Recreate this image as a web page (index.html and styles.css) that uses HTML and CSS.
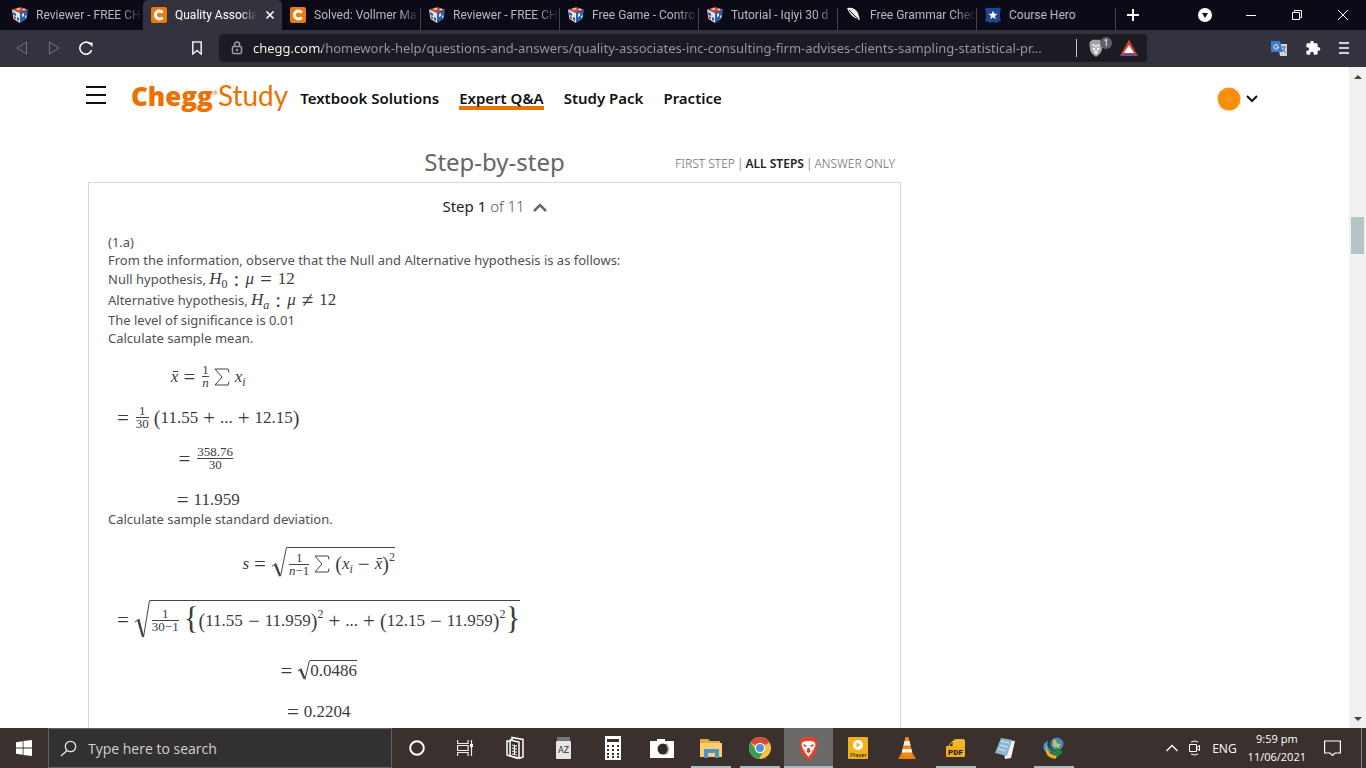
FILE: index.html
```html
<!DOCTYPE html>
<html lang="en">
<head>
  <meta charset="UTF-8">
  <meta name="viewport" content="width=device-width, initial-scale=1.0">
  <title>Quality Associates</title>
  <link rel="stylesheet" href="styles.css">
</head>
<body>
  <!-- shared icons -->
  <svg class="defs" aria-hidden="true">
    <symbol id="cube" viewBox="0 0 16 16">
      <path d="M0 2.500L8 0l8 2.500L8 6z" fill="#c94a3c"/>
      <path d="M0 2.500L8 6v10L1.500 12z" fill="#dfe3ea"/>
      <path d="M16 2.500L8 6v10l6.500-4z" fill="#2f5fa8"/>
      <path d="M4 2l3-1 2 1-3 1zM10 2.500l2-1 2 1-2 1z" fill="#f0d9d6"/>
      <path d="M1 5l3 1.500V9L1.300 8zM5 10l2 1v3l-2-1z" fill="#2c58a5"/>
      <path d="M2 9l2 1v2.500l-2-1z" fill="#c94a3c"/>
      <path d="M10 7l2-1v3l-2 1zM13 9l1.500-1v2L13 11z" fill="#e8edf5"/>
    </symbol>
    <symbol id="chegg" viewBox="0 0 16 16">
      <rect width="16" height="16" rx="2" fill="#e87c10"/>
      <path d="M11.600 5.600A4 4 0 1 0 11.600 10.400" fill="none" stroke="#fff" stroke-width="3"/>
    </symbol>
    <symbol id="lion" viewBox="0 0 18 24">
      <path d="M4 1h10l1.500 2H17l1 4-1.500 9Q15 20 9 24 3 20 1.500 16L0 7l1-4h1.500z"/>
    </symbol>
    <symbol id="sigma" viewBox="0 0 16 18">
      <path d="M15 4.500L14.200 1H1l7 8-7 8h13.200L15 13.500" fill="none" stroke="#444"/>
    </symbol>
  </svg>

  <div class="tabs" role="tablist">
    <button class="tab" role="tab"><svg class="icon"><use href="#cube"/></svg><span>Reviewer - FREE CH</span></button>
    <button class="tab active" role="tab" aria-selected="true"><svg class="icon"><use href="#chegg"/></svg><span>Quality Associa</span>
      <svg class="close" viewBox="0 0 10 10"><path d="M1.500 1.500l7 7M8.500 1.500l-7 7" stroke="#fff" stroke-width="1.600"/></svg></button>
    <button class="tab" role="tab"><svg class="icon"><use href="#chegg"/></svg><span>Solved: Vollmer Ma</span></button>
    <button class="tab" role="tab"><svg class="icon"><use href="#cube"/></svg><span>Reviewer - FREE CH</span></button>
    <button class="tab" role="tab"><svg class="icon"><use href="#cube"/></svg><span>Free Game - Contro</span></button>
    <button class="tab" role="tab"><svg class="icon"><use href="#cube"/></svg><span>Tutorial - Iqiyi 30 d</span></button>
    <button class="tab" role="tab"><svg class="icon" viewBox="0 0 16 16"><path d="M1 1q8-1 11 5l2 7-3-1Q4 9 1 1z" fill="#eee"/><path d="M3 3l9 9" stroke="#0b0b17" stroke-width="1"/></svg><span>Free Grammar Chec</span></button>
    <button class="tab" role="tab"><svg class="icon" viewBox="0 0 16 16"><path d="M1 0l2 1h10l2-1 1 3-1 2v6l1 3-3 1-2 1-3-1-3 1-2-1-3-1 1-3V5L0 3z" fill="#1d4596"/><path d="M8 3.500l1.200 3.200 3.400.1-2.700 2.100 1 3.300L8 10.300l-2.900 1.900 1-3.300-2.700-2.100 3.400-.1z" fill="#fff"/></svg><span>Course Hero</span></button>
    <button class="new-tab" aria-label="New tab"><svg width="12" height="12"><path d="M6 0v12M0 6h12" stroke="#fff" stroke-width="2"/></svg></button>
    <div class="window-buttons">
      <button aria-label="Search tabs"><svg width="14" height="14"><circle cx="7" cy="7" r="7" fill="#fff"/><path d="M4 5h6L7 10z" fill="#0b0b17"/></svg></button>
      <button aria-label="Minimize"><svg width="10" height="10"><path d="M0 5.500h10" stroke="#fff"/></svg></button>
      <button aria-label="Restore"><svg width="10" height="10" fill="none" stroke="#fff"><path d="M.5 2.500h7v7h-7zM2.500 2V.5h7v7H8"/></svg></button>
      <button aria-label="Close"><svg width="10" height="10"><path d="M0 0l10 10M10 0L0 10" stroke="#fff"/></svg></button>
    </div>
  </div>

  <div class="toolbar">
    <div class="history">
      <button aria-label="Back"><svg width="14" height="14" fill="none" stroke="#70727c"><path d="M11.500 1v12L2 7z"/></svg></button>
      <button aria-label="Forward"><svg width="14" height="14" fill="none" stroke="#70727c"><path d="M2.500 1v12L12 7z"/></svg></button>
      <button aria-label="Reload"><svg width="14" height="14"><path d="M11 2.800A6 6 0 1 0 12.600 9" fill="none" stroke="#fff" stroke-width="1.600"/><path d="M9 1.500h4.500V6z" fill="#fff"/></svg></button>
    </div>
    <button class="bookmark" aria-label="Bookmark"><svg width="12" height="14"><path d="M1.800 1h8.400v12L6 9.500 1.800 13z" fill="none" stroke="#e4e4e8" stroke-width="1.600"/></svg></button>
    <div class="address">
      <svg width="12" height="14"><rect x="1.500" y="5.500" width="9" height="7" rx="1" fill="none" stroke="#9a9ca0" stroke-width="1.500"/><path d="M3.500 5V3.500a2.500 2.500 0 0 1 5 0V5" fill="none" stroke="#9a9ca0" stroke-width="1.500"/><circle cx="6" cy="9" r="1.200" fill="#9a9ca0"/></svg>
      <input type="text" aria-label="Address" value="chegg.com/homework-help/questions-and-answers/quality-associates-inc-consulting-firm-advises-clients-sampling-statistical-pr...">
      <button class="shield" aria-label="Shields">
        <svg width="16" height="18" viewBox="0 0 18 24" fill="#a2a3a7"><use href="#lion"/><path d="M4 7l4 1 1 2 1-2 4-1-1 4 1 3-4 2 2 2-3 2-3-2 2-2-4-2 1-3z" fill="#fff"/><path d="M5 10l3 1M13 10l-3 1M9 11v5" stroke="#777" stroke-width="1.500"/></svg>
        <span class="badge">1</span>
      </button>
      <button aria-label="Rewards"><svg width="18" height="16"><path d="M9 0l3 5.500-3 1.500-5 9H0z" fill="#e5482f"/><path d="M9 0l9 16h-4L6 5.500z" fill="#d8392c"/><path d="M0 16l4-3h10l4 3z" fill="#784a86"/><path d="M9 5l5 8H4z" fill="#fff"/></svg></button>
    </div>
    <div class="extensions">
      <button aria-label="Translate"><svg width="16" height="16"><path d="M7 4h9v12H9z" fill="#cfd2d6"/><path d="M0 1h9l3 11H1q-1 0-1-1z" fill="#3c7dc9"/><path d="M7 5.500A2.300 2.300 0 1 0 7.500 7H5.500" fill="none" stroke="#fff"/><path d="M10 7h5M12.500 6v1M14 7q-1 4-3 5M12 9l3 4" stroke="#687077" fill="none"/></svg></button>
      <button aria-label="Extensions"><svg width="16" height="16" viewBox="0 0 24 24"><path d="M20.500 11H19V7a2 2 0 0 0-2-2h-4V3.500a2.500 2.500 0 0 0-5 0V5H4a2 2 0 0 0-2 2v3.800h1.500a2.700 2.700 0 0 1 0 5.400H2V20a2 2 0 0 0 2 2h3.800v-1.500a2.700 2.700 0 0 1 5.400 0V22H17a2 2 0 0 0 2-2v-4h1.500a2.500 2.500 0 0 0 0-5z" fill="#fff"/></svg></button>
      <button aria-label="Menu"><svg width="10" height="12"><path d="M0 1h10M0 6h10M0 11h10" stroke="#d0d1d8" stroke-width="2"/></svg></button>
    </div>
  </div>

  <div class="viewport">
    <div class="page">
      <header class="site-header">
        <button class="menu" aria-label="Menu"><svg width="20" height="18"><path d="M0 1h20M0 9h20M0 17h20" stroke="#111" stroke-width="2"/></svg></button>
        <a class="logo" href="#"><b>Chegg</b><sup>®</sup><span>Study</span></a>
        <nav>
          <a href="#">Textbook Solutions</a>
          <a href="#" class="current">Expert Q&amp;A</a>
          <a href="#">Study Pack</a>
          <a href="#">Practice</a>
        </nav>
        <button class="account" aria-label="Account">
          <svg width="24" height="24"><circle cx="12" cy="12" r="11.500" fill="#f7980f"/><circle cx="12" cy="12" r="7" fill="none" stroke="#ee8410" stroke-width="6" stroke-dasharray="1 1"/></svg>
          <svg width="12" height="8"><path d="M1 1l5 5 5-5" fill="none" stroke="#111" stroke-width="2"/></svg>
        </button>
      </header>

      <main>
        <div class="steps-head">
          <h1>Step-by-step</h1>
          <div class="views"><a href="#">FIRST STEP</a><span>|</span><a href="#" class="on">ALL STEPS</a><span>|</span><a href="#">ANSWER ONLY</a></div>
        </div>
        <section class="card">
          <h2><b>Step 1</b> of 11 <svg width="14" height="9"><path d="M1 8l6-6 6 6" fill="none" stroke="#666" stroke-width="2.500"/></svg></h2>
          <p>(1.a)</p>
          <p>From the information, observe that the Null and Alternative hypothesis is as follows:</p>
          <p class="with-math">Null hypothesis, <span class="math"><i>H</i><sub>0</sub><span class="op">:</span><i>μ</i><span class="op">=</span>12</span></p>
          <p class="with-math">Alternative hypothesis, <span class="math"><i>H</i><sub><i>a</i></sub><span class="op">:</span><i>μ</i><span class="op">≠</span>12</span></p>
          <p>The level of significance is 0.01</p>
          <p>Calculate sample mean.</p>

          <div class="equations math">
            <div class="eq"><i class="bar">x</i><span class="op">=</span><span class="frac"><span>1</span><i>n</i></span><svg class="sum"><use href="#sigma"/></svg><i>x</i><sub><i>i</i></sub></div>
            <div class="eq"><span class="op">=</span><span class="frac"><span>1</span><span>30</span></span><span class="paren">(</span>11.55<span class="op">+</span>...<span class="op">+</span>12.15<span class="paren">)</span></div>
            <div class="eq"><span class="op">=</span><span class="frac"><span>358.76</span><span>30</span></span></div>
            <div class="eq"><span class="op">=</span>11.959</div>
          </div>

          <p>Calculate sample standard deviation.</p>

          <div class="equations math">
            <div class="eq mid"><i>s</i><span class="op">=</span><span class="root"><svg viewBox="0 0 16 34" preserveAspectRatio="none"><path d="M1 20l4-3 4.500 13L15.500 .5" fill="none" stroke="#444"/><path d="M4 18l5 12" stroke="#444" stroke-width="2"/></svg><span class="radicand"><span class="frac"><span>1</span><span><i>n</i>−1</span></span><svg class="sum"><use href="#sigma"/></svg><span class="paren">(</span><i>x</i><sub><i>i</i></sub><span class="op">−</span><i class="bar">x</i><span class="paren">)</span><sup>2</sup></span></span></div>
            <div class="eq tall"><span class="op">=</span><span class="root"><svg viewBox="0 0 16 40" preserveAspectRatio="none"><path d="M1 22l4-3 4.500 18L15.500 .5" fill="none" stroke="#444"/><path d="M4 20l5 17" stroke="#444" stroke-width="2"/></svg><span class="radicand"><span class="frac"><span>1</span><span>30−1</span></span><span class="brace">{</span><span class="paren">(</span>11.55<span class="op">−</span>11.959<span class="paren">)</span><sup>2</sup><span class="op">+</span>...<span class="op">+</span><span class="paren">(</span>12.15<span class="op">−</span>11.959<span class="paren">)</span><sup>2</sup><span class="brace">}</span></span></span></div>
            <div class="eq"><span class="op">=</span><span class="root"><svg viewBox="0 0 13 19" preserveAspectRatio="none"><path d="M1 10l3-2 4 9L12.500 .5" fill="none" stroke="#444"/><path d="M3.500 9l4 8" stroke="#444" stroke-width="2"/></svg><span class="radicand">0.0486</span></span></div>
            <div class="eq"><span class="op">=</span>0.2204</div>
          </div>
        </section>
      </main>
    </div>
    <div class="scrollbar">
      <svg width="8" height="4"><path d="M0 4l4-4 4 4z" fill="#444"/></svg>
      <div class="track"><div class="thumb"></div></div>
      <svg width="8" height="4"><path d="M0 0l4 4 4-4z" fill="#444"/></svg>
    </div>
  </div>

  <footer class="taskbar">
    <button class="start" aria-label="Start"><svg width="16" height="16" fill="#fff"><path d="M0 2.200L6.700 1.200V7.600H0zM7.500 1.100L16 0v7.600H7.500zM0 8.400h6.700v6.400L0 13.800zM7.500 8.400H16V16l-8.500-1.100z"/></svg></button>
    <label class="search">
      <svg width="17" height="17" fill="none" stroke="#e8e6e5" stroke-width="1.300"><circle cx="10.500" cy="6.500" r="5.200"/><path d="M7 10.500L1 16"/></svg>
      <input type="text" placeholder="Type here to search">
    </label>
    <div class="apps">
      <button aria-label="Cortana"><svg width="16" height="16"><circle cx="8" cy="8" r="6.800" fill="none" stroke="#fff" stroke-width="2"/></svg></button>
      <button aria-label="Task view"><svg width="17" height="16" fill="none" stroke="#eee" stroke-width="1.200"><path d="M.6 0v3.500h10.500V0M.6 5.500h10.500v5H.6zM.6 16v-3.500h10.500V16M14.500 0v16"/><path d="M13 4h3v3h-3z" fill="#fff" stroke="none"/></svg></button>
      <button aria-label="Solitaire"><svg width="18" height="24" fill="none" stroke="#fff" stroke-width="1.500"><path d="M6 4V1.500l11 2V21l-4 1.500M3.500 5.500L1 5v14l11 3.500"/><path d="M4 4l9 2v16l-9-2z"/><path d="M6 9l5 1M6 12l5 1M6 15l5 1M6 18l5 1M8.500 9v10" stroke-width="1.200"/></svg></button>
      <button aria-label="Dictionary"><svg width="15" height="22"><rect x="1" width="13" height="4" fill="#777"/><rect y="4" width="15" height="18" rx="1" fill="#e6e6e6"/><text x="2" y="16" class="az">AZ</text></svg></button>
      <button aria-label="Calculator"><svg width="18" height="24"><rect x="1" width="16" height="24" fill="#fff"/><path d="M3 3h12v3H3z" fill="#3a302d"/><path d="M3 10h12M3 14h12M3 18h12M3 21h12" stroke="#3a302d" stroke-width="2" stroke-dasharray="2 3"/></svg></button>
      <button aria-label="Camera"><svg width="24" height="20"><path d="M0 3h7V1h8v2h9v17H0z" fill="#fff"/><circle cx="13" cy="11" r="5.500" fill="#2f2927"/><path d="M16 6q4 5 0 10" stroke="#888" stroke-width="1.500" fill="none"/></svg></button>
      <button class="running" aria-label="File Explorer"><svg width="22" height="20"><path d="M0 1h8l2 2h10v16H0z" fill="#e7a83c"/><path d="M0 5h22v14H0z" fill="#f8ce73"/><path d="M4 11h15v9h-4v-5H8v5H4z" fill="#4f93ca"/></svg></button>
      <button class="running" aria-label="Chrome"><svg width="22" height="22" viewBox="0 0 22 22"><circle cx="11" cy="11" r="11" fill="#f5c33b"/><path d="M11 11L1.500 5.500A11 11 0 0 1 20.500 5.500z" fill="#d84a3a"/><path d="M1.500 5.500A11 11 0 0 0 10 22l4-7-6-1z" fill="#3d9c57"/><circle cx="11" cy="11" r="5.200" fill="#fff"/><circle cx="11" cy="11" r="4" fill="#4f8fd8"/></svg></button>
      <button class="running focus" aria-label="Brave"><svg width="19" height="24" viewBox="0 0 18 24" fill="#ea4028"><use href="#lion"/><path d="M3 6l4-1h4l4 1 1 3-2 5-2 3-3 4-3-4-2-3-2-5z" fill="#fff"/><path d="M4 8l3 1.500v1.500L4 10zM14 8l-3 1.500v1.500l3-1zM8 12h2l1 4-2 1-2-1zM5 13l1 2.500L5 15zM13 13l-1 2.500 1-.5z" fill="#d93d28"/></svg></button>
      <button aria-label="Player"><svg width="20" height="22"><rect width="20" height="22" rx="1" fill="#f0b21f"/><circle cx="10" cy="8" r="5" fill="#fff"/><path d="M8.500 5.500v5l4-2.500z" fill="#f0b21f"/><text x="2" y="20" class="player">Player</text></svg></button>
      <button aria-label="VLC"><svg width="18" height="22"><path d="M3 17h12l3 5H0z" fill="#e8820e"/><path d="M7.500 0h3L15 18q-6 3-12 0z" fill="#f08a18"/><path d="M6.500 4h5l1 4.500h-7zM4.600 12h8.800l.8 3.500H3.800z" fill="#f3f1ef"/></svg></button>
      <button class="running" aria-label="PDF"><svg width="19" height="18"><path d="M1 9l6-7Q8 0 10 0h7q2 0 2 2v6z" fill="#f4b52b"/><path d="M1 9l6-7v6z" fill="#2a2421" stroke="#f4b52b"/><rect y="7" width="19" height="11" rx="1" fill="#f2ae1f"/><text x="2" y="16" class="pdf">PDF</text></svg></button>
      <button aria-label="Notepad"><svg width="20" height="22"><path d="M7 2l13 2-4 17-6 1z" fill="#f3f5f6"/><path d="M6 1l11 2-5 16L0 16z" fill="#8db8d2"/><path d="M6 4l8 2M5 8l8 2M3 12l8 2" stroke="#d9edf5"/></svg></button>
      <button class="running" aria-label="Download Manager"><svg width="22" height="22"><circle cx="14" cy="7" r="6.500" fill="#4d85b8"/><path d="M10 2q5 1 3 4l5 1-3 5-5-3z" fill="#b9c46a"/><path d="M5 4Q-1 6 1 13l5 4 2-3Q3 10 5 4z" fill="#3f9be0"/><path d="M4 7Q2 17 15 19l-3 3Q-1 20 4 7z" fill="#e8ab24"/><path d="M6 8q2 6 7 6v-4l7 5-7 6v-3Q5 17 6 8z" fill="#23844a"/></svg></button>
    </div>
    <div class="tray">
      <button aria-label="Show hidden icons"><svg width="12" height="8"><path d="M.5 7L6 1.500 11.500 7" fill="none" stroke="#fff" stroke-width="1.300"/></svg></button>
      <button aria-label="Meet Now"><svg width="12" height="16" fill="none" stroke="#fff"><path d="M.5 4.500h7v7h-7zM7.500 7.500l3-2v5l-3-2M2 2Q6 0 9 2M2 14q4 2 7 0"/></svg></button>
      <button>ENG</button>
      <button class="clock">9:59 pm<br>11/06/2021</button>
      <button class="notes" aria-label="Notifications"><svg width="17" height="17"><path d="M.6 1h15.800v12h-5.400l-2.500 2.500L6 13H.6z" fill="none" stroke="#fff" stroke-width="1.200"/></svg></button>
    </div>
  </footer>
</body>
</html>
```

FILE: styles.css
```css
:root {
  --frame: #0b0b17;
  --toolbar: #33333f;
  --orange: #eb7100;
  --ui: "Open Sans", sans-serif;
}
* { box-sizing: border-box; margin: 0; padding: 0; }
body { height: 100vh; overflow: hidden;
  display: flex; flex-direction: column;
  font-family: "Noto Sans", sans-serif; color: #333; background: #fff;
}
button { background: none; border: none; font: inherit; color: inherit;
  display: flex; align-items: center; justify-content: center;
}
a { color: inherit; text-decoration: none; }
svg { flex: none; }
.defs { display: none; }

/* browser tabs */
.tabs { height: 30px; display: flex; padding-left: 4px; background: var(--frame);
  font-family: Roboto, sans-serif; font-size: 12px; color: #b9bac0;
}
.tab { flex: 0 1 139px; min-width: 0; padding: 0 1px 0 8px; gap: 8px;
  justify-content: flex-start; position: relative;
}
.tab::after { content: ""; position: absolute; right: 0; top: 8px; bottom: 0; width: 1px; background: #44444d; }
.tab:first-child::after, .tab.active::after { display: none; }
.tab span { flex: 1; min-width: 0; overflow: hidden; white-space: nowrap; text-align: left;
  mask-image: linear-gradient(90deg, #000 80%, transparent);
}
.tab:nth-child(8) span { mask-image: none; }
.tab.active { background: var(--toolbar); border-radius: 5px 5px 0 0; color: #fff; padding-right: 7px; }
.tab .icon { width: 16px; height: 16px; }
.close { width: 10px; height: 10px; }
.new-tab { width: 34px; }
.window-buttons { margin-left: auto; display: flex; }
.window-buttons button { width: 46px; }

/* address row */
.toolbar { height: 37px; display: flex; align-items: center; padding-bottom: 2px; background: var(--toolbar); }
.history { display: flex; gap: 18px; padding-left: 15px; width: 190px; }
.bookmark { width: 14px; }
.address { flex: 1; max-width: 928px; height: 28px; margin-left: 15px; padding: 0 9px 0 12px;
  display: flex; align-items: center; background: #1b1b21; border-radius: 4px;
}
.address input { flex: 1; min-width: 0; margin: 0 14px 0 10px; border: none; outline: none;
  font-family: "Noto Sans", sans-serif; font-size: 13px; color: transparent;
  background: linear-gradient(90deg, #fff 69px, #9b9ca2 69px);
  background-clip: text;
}
.shield { position: relative; width: 40px; height: 18px; padding: 0 12px 0 10px; border-left: 1px solid #c5c5ca; }
.badge { position: absolute; right: 4px; top: -2px; width: 12px; height: 12px; border-radius: 50%;
  background: #5d6068; color: #fff; font-size: 9px; line-height: 12px;
}
.address button + button { margin-left: 4px; }
.extensions { margin-left: auto; display: flex; gap: 18px; padding-right: 17px; }

/* web page */
.viewport { flex: 1; min-height: 0; display: flex; }
.page { flex: 1; min-width: 0; overflow: hidden; }
.site-header { display: flex; align-items: center; height: 63px; padding: 0 91px 0 86px; }
.menu { padding-bottom: 8px; }
.logo { margin-left: 25px; display: flex; align-items: baseline; color: var(--orange); font-size: 26px; line-height: 36px; padding-bottom: 7px; }
.logo b { font-family: "Open Sans", sans-serif; font-weight: 800; }
.logo sup { font-size: 6px; line-height: 12px; align-self: flex-start; padding-top: 10px; }
.logo span { font-family: Lato, sans-serif; font-size: 28px; }
nav { display: flex; gap: 20px; margin-left: 12px; padding-bottom: 2px; font-size: 15px; font-weight: 600; color: #111; line-height: 22px; }
nav .current { box-shadow: inset 0 -3px var(--orange), 0 1px var(--orange); }
.account { margin-left: auto; gap: 5px; }
main { max-width: 901px; padding-left: 88px; }
.steps-head { display: grid; grid-template-columns: 1fr auto 1fr; align-items: center; height: 52px; padding-top: 12px; }
.steps-head h1 { grid-column: 2; font-size: 24px; font-weight: 400; line-height: 32px; color: #666; }
.views { justify-self: end; display: flex; gap: 2px; padding: 2px 6px 0 0; font-size: 12px; font-weight: 300; color: #666; white-space: nowrap; }
.views .on { font-weight: 600; color: #222; }
.card { border: 1px solid #d9d9d9; padding: 12px 19px; }
.card h2 { height: 38px; line-height: 22px; text-align: center; font-size: 15px; font-weight: 300; color: #555; }
.card h2 b { font-weight: 400; color: #222; }
.card h2 svg { margin-left: 4px; }
.card p { font-size: 13px; line-height: 18px; color: #505050; }
.card p.with-math { line-height: 21px; height: 21px; }

/* formulas */
.math { font-family: "Liberation Serif", serif; font-size: 17px; color: #3c3c3c; line-height: 20px; }
.math sub, .math sup { font-size: 12px; line-height: 0; }
.op { margin: 0 5px; font-size: 21px; line-height: 0; vertical-align: -2px; }
.with-math .op { margin: 0 6px; }
.equations { width: fit-content; padding: 19px 9px 0; display: flex; flex-direction: column; align-items: center; gap: 20px; }
.eq { height: 21px; display: flex; align-items: center; white-space: nowrap; }
.eq.mid { height: 33px; }
.eq.tall { height: 40px; }
.eq > .op:first-child { margin-left: 0; }
.eq sub, .eq sup { line-height: 12px; }
.eq sub { padding-top: 10px; }
.eq sup { padding-bottom: 14px; }
.bar { position: relative; }
.bar::before { content: ""; position: absolute; left: 2px; right: 0; top: 4px; height: 1px; background: #444; }
.frac { display: inline-flex; flex-direction: column; align-items: center; margin: 0 5px 0 2px;
  font-size: 13px; line-height: 12px;
}
.frac > :first-child { align-self: stretch; text-align: center; border-bottom: 1px solid #444; }
.paren { font-size: 20px; }
.brace { font-size: 31px; line-height: 32px; padding-bottom: 4px; }
.sum { width: 16px; height: 18px; margin-right: 5px; }
.root { display: flex; height: 100%; }
.root svg:first-child { width: 13px; height: 100%; }
.radicand { display: flex; align-items: center; border-top: 1px solid #444; }
.mid .root svg:first-child, .tall .root svg:first-child { width: 16px; }

.scrollbar { width: 17px; background: #f0f0f0; display: flex; flex-direction: column; align-items: center; padding: 8px 0 7px; }
.track { flex: 1; width: 13px; display: flex; flex-direction: column; }
.track::before { content: ""; flex: 138; }
.track::after { content: ""; flex: 462; }
.thumb { flex: 37; background: #b5c4c4; }

/* taskbar */
.taskbar { height: 40px; display: flex; background: #3a302d; color: #fff; font-family: var(--ui); font-size: 12px; }
.start { width: 48px; }
.search { width: 344px; display: flex; align-items: center; gap: 11px; padding-left: 11px;
  background: #333032; border: 1px solid #64605f;
}
.search input { flex: 1; min-width: 0; background: none; border: none; outline: none; font-family: var(--ui); font-size: 14px; }
.search input::placeholder { color: #d3d0cd; }
.apps { display: flex; }
.apps button { width: 49px; position: relative; }
.apps .running::after { content: ""; position: absolute; left: 5px; right: 4px; bottom: 0; height: 2px; background: #a9bcc0; }
.apps .focus { background: #6c6867; }
.apps .focus::after { left: 0; right: 0; }
.az { font: 9px Roboto, sans-serif; fill: #333; }
.player { font: 6px Roboto, sans-serif; fill: #222; }
.pdf { font: 900 8px Roboto, sans-serif; fill: #222; }
.tray { margin-left: auto; display: flex; align-items: center; padding-right: 4px; gap: 11px; }
.clock { line-height: 18px; font-size: 11px; }
.notes { height: 40px; padding: 0 20px 0 7px; border-right: 1px solid #8b8583; }
```
